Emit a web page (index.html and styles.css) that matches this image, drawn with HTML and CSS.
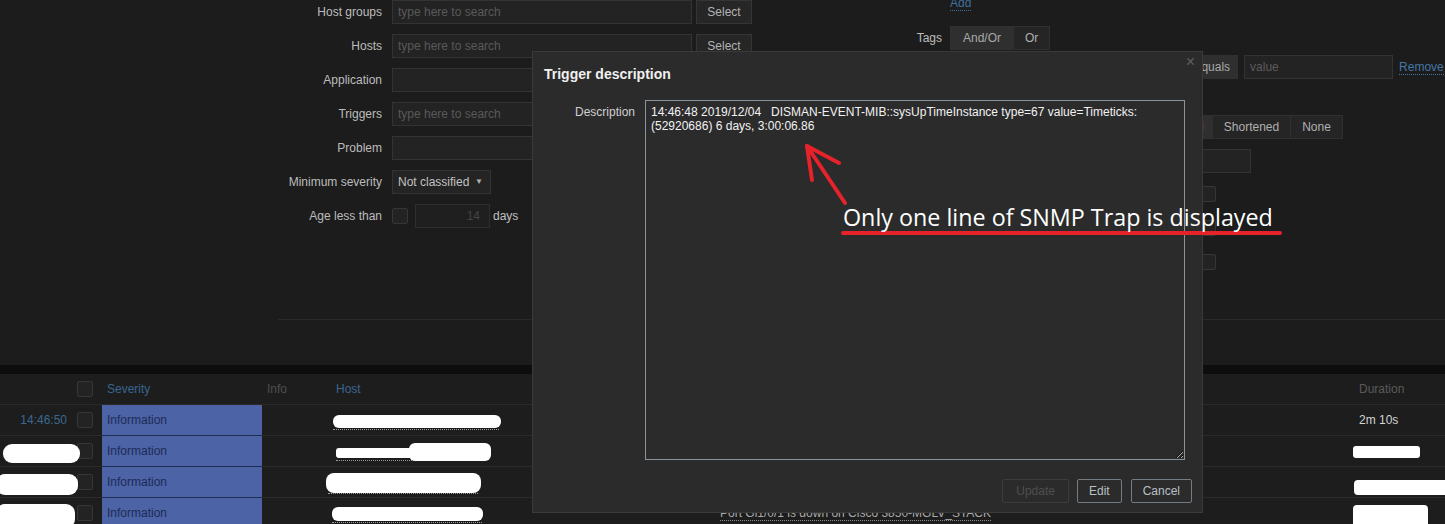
FILE: index.html
```html
<!DOCTYPE html>
<html>
<head>
<meta charset="utf-8">
<title>Problems</title>
<link rel="stylesheet" href="styles.css">
</head>
<body>
<div class="page">
  <div class="filter">
    <div class="filter-body">
      <div class="fcol1">
        <div class="lbl">Host groups</div>
        <div class="field"><div class="input">type here to search</div><div class="btn">Select</div></div>
        <div class="lbl">Hosts</div>
        <div class="field"><div class="input">type here to search</div><div class="btn">Select</div></div>
        <div class="lbl">Application</div>
        <div class="field"><div class="input"></div><div class="btn">Select</div></div>
        <div class="lbl">Triggers</div>
        <div class="field"><div class="input">type here to search</div><div class="btn">Select</div></div>
        <div class="lbl">Problem</div>
        <div class="field"><div class="input"></div></div>
        <div class="lbl">Minimum severity</div>
        <div class="field"><div class="select">Not classified<span class="caret">&#9660;</span></div></div>
        <div class="lbl">Age less than</div>
        <div class="field"><span class="cb"></span><div class="num">14</div><span class="days">days</span></div>
      </div>
      <div class="fcol2">
        <div class="r2 ra"><div class="lbl2"></div><div class="fld"><span class="link">Add</span></div></div>
        <div class="r2 rt"><div class="lbl2">Tags</div><div class="fld"><div class="seg"><span class="sb on ao">And/Or</span><span class="sb">Or</span></div></div></div>
        <div class="r2 rv"><div class="lbl2"></div>
          <div class="fld">
            <div class="input tagname">tag</div>
            <div class="seg ops"><span class="sb">Contains</span><span class="sb on">Equals</span></div>
            <div class="input value">value</div>
            <span class="link rm">Remove</span>
          </div>
        </div>
        <div class="r2 radd"><div class="lbl2"></div><div class="fld"><span class="link">Add</span></div></div>
        <div class="r2 rs"><div class="lbl2">Show tags</div>
          <div class="fld">
            <div class="seg"><span class="sb">None</span><span class="sb">1</span><span class="sb">2</span><span class="sb on">3</span></div>
            <span class="tnl">Tag name</span>
            <div class="seg"><span class="sb on full">Full</span><span class="sb sh">Shortened</span><span class="sb no">None</span></div>
          </div>
        </div>
        <div class="r2 rp"><div class="lbl2">Tag display priority</div><div class="fld"><div class="input prio"></div></div></div>
        <div class="r2 rc"><div class="lbl2">Show operational data</div><div class="fld"><span class="cb far"></span></div></div>
        <div class="r2 rc2"><div class="lbl2"></div><div class="fld"><span class="cb far"></span></div></div>
        <div class="r2 rc2"><div class="lbl2">Show timeline</div><div class="fld"><span class="cb far"></span></div></div>
      </div>
    </div>
  </div>
  <div class="band"></div>
  <div class="table">
    <div class="tr th">
      <div class="td"></div>
      <div class="td"><span class="cb"></span></div>
      <div class="td hl">Severity</div>
      <div class="td hg">Info</div>
      <div class="td hl">Host</div>
      <div class="td hg">Problem</div>
      <div class="td hg">Duration</div>
    </div>
    <div class="tr">
      <div class="td tm">14:46:50</div>
      <div class="td"><span class="cb"></span></div>
      <div class="td sev">Information</div>
      <div class="td"></div>
      <div class="td host"><span class="dot d1"></span><span class="blob h1"></span></div>
      <div class="td prob">Port Gi1/0/3 is down on Cisco 3850-MGLV_STACK</div>
      <div class="td dur">2m 10s</div>
    </div>
    <div class="tr">
      <div class="td tm"><span class="blob t2"></span></div>
      <div class="td"><span class="cb"></span></div>
      <div class="td sev">Information</div>
      <div class="td"></div>
      <div class="td host"><span class="dot d2"></span><span class="blob h2a"></span><span class="blob h2b"></span></div>
      <div class="td prob">Port Gi1/0/2 is down on Cisco 3850-MGLV_STACK</div>
      <div class="td dur"><span class="blob u2"></span></div>
    </div>
    <div class="tr">
      <div class="td tm"><span class="blob t3"></span></div>
      <div class="td"><span class="cb"></span></div>
      <div class="td sev">Information</div>
      <div class="td"></div>
      <div class="td host"><span class="dot d3"></span><span class="blob h3"></span></div>
      <div class="td prob">Port Gi1/0/4 is down on Cisco 3850-MGLV_STACK</div>
      <div class="td dur"><span class="blob u3"></span></div>
    </div>
    <div class="tr">
      <div class="td tm"><span class="blob t4"></span></div>
      <div class="td"><span class="cb"></span></div>
      <div class="td sev">Information</div>
      <div class="td"></div>
      <div class="td host"><span class="dot d4"></span><span class="blob h4"></span></div>
      <div class="td prob"><span class="plink">Port Gi1/0/1 is down on Cisco 3850-MGLV_STACK</span></div>
      <div class="td dur"><span class="blob u4"></span></div>
    </div>
  </div>

  <div class="modal">
    <span class="close">&times;</span>
    <div class="mtitle">Trigger description</div>
    <div class="mbody">
      <div class="mlbl">Description</div>
      <textarea class="ta" readonly>14:46:48 2019/12/04   DISMAN-EVENT-MIB::sysUpTimeInstance type=67 value=Timeticks: (52920686) 6 days, 3:00:06.86</textarea>
    </div>
    <div class="mfoot">
      <span class="mbtn dis">Update</span>
      <span class="mbtn">Edit</span>
      <span class="mbtn cancel">Cancel</span>
    </div>
  </div>

  <svg class="annot" width="1445" height="524" viewBox="0 0 1445 524">
    <g stroke="#e6222a" stroke-width="4" stroke-linecap="round" fill="none">
      <line x1="845" y1="203" x2="807" y2="146"/>
      <line x1="807" y1="146" x2="839" y2="163"/>
      <line x1="807" y1="146" x2="812" y2="180"/>
      <line x1="843" y1="233" x2="1280" y2="233"/>
    </g>
  </svg>
  <div class="annot-text">Only one line of SNMP Trap is displayed</div>
</div>
</body>
</html>
```
FILE: styles.css
```css
body {
  margin: 0;
  background: #1c1c1c;
  font: 12px "Liberation Sans", Arial, sans-serif;
  color: #bdbdbd;
}
.page {
  position: relative;
  width: 1445px;
  height: 524px;
  overflow: hidden;
}

/* ---------- filter ---------- */
.filter {
  height: 365px;
  background: #1c1c1c;
}
.filter-body {
  margin-left: 278px;
  height: 319px;
  border-bottom: 1px solid #2a2a2a;
  display: flex;
}
.fcol1 {
  width: 474px;
  display: grid;
  grid-template-columns: 104px auto;
  column-gap: 10px;
  row-gap: 10px;
  align-content: start;
}
.lbl {
  text-align: right;
  line-height: 24px;
  color: #bcbcbc;
  white-space: nowrap;
}
.field {
  display: flex;
  align-items: center;
  height: 24px;
}
.input {
  box-sizing: border-box;
  width: 300px;
  height: 24px;
  background: #232323;
  border: 1px solid #333;
  padding: 0 5px;
  line-height: 22px;
  color: #595959;
  white-space: nowrap;
  overflow: hidden;
}
.btn {
  box-sizing: border-box;
  width: 56px;
  height: 24px;
  margin-left: 4px;
  background: #262626;
  border: 1px solid #353535;
  color: #b3b3b3;
  text-align: center;
  line-height: 22px;
}
.select {
  box-sizing: border-box;
  width: 99px;
  height: 24px;
  background: #242424;
  border: 1px solid #333;
  padding: 0 5px;
  line-height: 22px;
  color: #c2c2c2;
  display: flex;
  justify-content: space-between;
}
.caret {
  font-size: 8px;
  color: #b0b0b0;
  margin-right: 2px;
}
.cb {
  display: inline-block;
  box-sizing: border-box;
  width: 16px;
  height: 16px;
  background: #232323;
  border: 1px solid #363636;
  border-radius: 2px;
  flex: none;
}
.num {
  box-sizing: border-box;
  width: 75px;
  height: 24px;
  margin-left: 7px;
  background: #1f1f1f;
  border: 1px solid #2e2e2e;
  padding: 0 9px;
  line-height: 22px;
  text-align: right;
  color: #444;
}
.days {
  margin-left: 3px;
  color: #c0c0c0;
}

.fcol2 {
  margin-left: 20px;
  margin-top: -5px;
  display: flex;
  flex-direction: column;
}
.r2 {
  display: grid;
  grid-template-columns: 170px auto;
  column-gap: 8px;
  align-items: center;
  height: 24px;
}
.lbl2 {
  text-align: right;
  color: #bcbcbc;
  white-space: nowrap;
}
.ra { height: 16px; }
.rt { margin-top: 15px; }
.rv { margin-top: 5px; }
.radd { margin-top: 6px; height: 16px; }
.rs { margin-top: 14px; }
.rp { margin-top: 10px; }
.rc { margin-top: 9px; }
.rc2 { margin-top: 10px; }
.fld {
  display: flex;
  align-items: center;
}
.link {
  color: #3f6f9c;
  border-bottom: 1px dotted #3f6f9c;
  line-height: 14px;
}
.seg {
  display: flex;
  height: 24px;
  box-sizing: border-box;
  border: 1px solid #303030;
  background: #222;
}
.sb {
  padding: 0 11px;
  line-height: 22px;
  color: #b0b0b0;
  border-left: 1px solid #303030;
  background: #252525;
}
.sb:first-child { border-left: none; }
.sb.on { background: #2f2f2f; color: #a8a8a8; }
.sb.ao { padding: 0 12px; }
.tagname { width: 168px; }
.ops { margin-left: 5px; }
.ops .sb { padding: 0 7px; }
.value { width: 149px; margin-left: 6px; color: #5c5c5c; }
.rm { margin-left: 6px; color: #4576a6; border-bottom-color: #4576a6; }
.tnl { margin-left: 23px; margin-right: 8px; }
.sb.full { padding: 0 8px; }
.sb.sh { padding: 0 11px; }
.sb.no { padding: 0 11px; }
.prio { width: 301px; }
.far { margin-left: 250px; }

/* ---------- table ---------- */
.band {
  height: 9px;
  background: #0d0d0e;
}
.table {
  background: #1d1d1d;
}
.tr {
  display: grid;
  grid-template-columns: 72px 30px 160px 69px 384px 639px 91px;
  height: 30px;
  border-bottom: 1px solid #2a2a2a;
}
.td {
  position: relative;
  display: flex;
  align-items: center;
  padding: 0 5px;
  white-space: nowrap;
}
.hl { color: #396590; }
.hg { color: #4f4f4f; }
.th .td:last-child { color: #5a5a5a; }
.tm {
  justify-content: flex-end;
  color: #3a6891;
}
.sev {
  background: #4c63a5;
  color: #1c2b58;
  border-bottom: 1px solid #1f2d55;
  margin-bottom: -1px;
}
.prob { color: #a9a9a9; }
.plink { border-bottom: 1px dotted #8a8a8a; line-height: 13px; position: relative; top: 1px; }
.dur { color: #d4d4d4; }

.blob {
  position: absolute;
  background: #fff;
  border-radius: 6px;
  z-index: 2;
}
.dot {
  position: absolute;
  border-bottom: 1px dotted #9a9a9a;
  height: 0;
}
.h1 { left: 2px; top: 10px; width: 168px; height: 13px; }
.d1 { left: 2px; top: 24px; width: 166px; }
.h2a { left: 5px; top: 12px; width: 80px; height: 10px; border-radius: 3px; }
.h2b { left: 78px; top: 7px; width: 82px; height: 18px; }
.d2 { left: 5px; top: 24px; width: 120px; }
.h3 { left: -5px; top: 6px; width: 155px; height: 20px; border-radius: 8px; }
.d3 { left: -3px; top: 26px; width: 150px; }
.h4 { left: 1px; top: 9px; width: 151px; height: 14px; }
.d4 { left: 1px; top: 24px; width: 150px; }
.t2 { left: 3px; top: 8px; width: 77px; height: 19px; border-radius: 9px; }
.t3 { left: -4px; top: 7px; width: 82px; height: 21px; border-radius: 9px; }
.t4 { left: -4px; top: 6px; width: 79px; height: 24px; border-radius: 9px; }
.u2 { left: -1px; top: 10px; width: 67px; height: 12px; border-radius: 3px; }
.u3 { left: 0; top: 13px; width: 95px; height: 15px; border-radius: 4px; }
.u4 { left: -1px; top: 7px; width: 75px; height: 24px; border-radius: 4px; }

/* ---------- modal ---------- */
.modal {
  position: absolute;
  left: 532px;
  top: 51px;
  width: 671px;
  height: 462px;
  box-sizing: border-box;
  background: #2b2b2b;
  border: 1px solid #3a3a3a;
  padding: 12px 10px 0 9px;
  z-index: 5;
  display: flex;
  flex-direction: column;
}
.close {
  position: absolute;
  top: 1px;
  right: 7px;
  font-size: 16px;
  color: #5e5e5e;
}
.mtitle {
  font-weight: bold;
  font-size: 14px;
  line-height: 20px;
  color: #f0f0f0;
  padding-left: 2px;
}
.mbody {
  margin-top: 16px;
  display: grid;
  grid-template-columns: 93px 540px;
  column-gap: 10px;
}
.mlbl {
  text-align: right;
  padding-top: 5px;
  line-height: 14px;
  color: #d0d0d0;
}
.ta {
  box-sizing: border-box;
  width: 540px;
  height: 360px;
  margin: 0;
  background: #2b2b2b;
  border: 1px solid #8a939a;
  color: #f2f2f2;
  font: 12px/14px "Liberation Sans", Arial, sans-serif;
  padding: 4px 5px;
  overflow: hidden;
  resize: both;
  outline: none;
}
.mfoot {
  margin-top: 19px;
  display: flex;
  justify-content: flex-end;
  gap: 9px;
}
.mbtn {
  box-sizing: border-box;
  height: 24px;
  padding: 0 11px;
  line-height: 22px;
  border: 1px solid #737c83;
  border-radius: 2px;
  color: #b9c0c5;
}
.mbtn.cancel { padding: 0 11px; }
.mbtn.dis {
  border-color: #3c3c3c;
  color: #4f4f4f;
  padding: 0 13px;
  margin-right: -1px;
}

/* ---------- annotation ---------- */
.annot {
  position: absolute;
  left: 0;
  top: 0;
  z-index: 10;
}
.annot-text {
  position: absolute;
  left: 843px;
  top: 206px;
  z-index: 11;
  font: 23.3px/23px "Open Sans", sans-serif;
  color: #fff;
  white-space: nowrap;
}
```
